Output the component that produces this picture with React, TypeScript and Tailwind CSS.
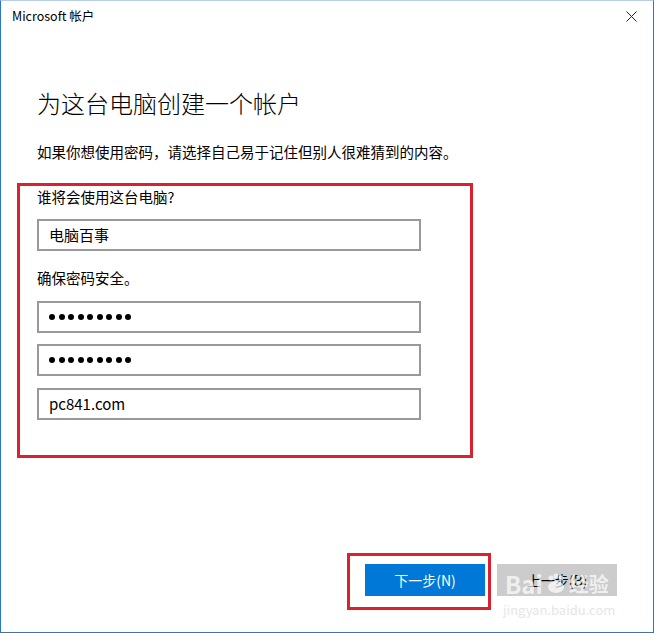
const cjk = { fontFamily: '"Segoe UI", "Noto Sans CJK SC", "Noto Sans", sans-serif' };

function Field({ children }: { children: React.ReactNode }) {
  return (
    <div className="flex h-[32px] w-[384px] items-center border-2 border-[#999999] bg-white pl-[10px]">
      {children}
    </div>
  );
}

function Dots() {
  return (
    <div className="flex gap-[3.5px]">
      {Array.from({ length: 9 }).map((_, i) => (
        <span key={i} className="h-[6px] w-[6px] rounded-full bg-black" />
      ))}
    </div>
  );
}

export default function App() {
  return (
    <div
      className="relative flex h-[633px] w-[654px] flex-col border border-[#2b79c2] border-t-[#b6d0ea] bg-white text-black"
      style={cjk}
    >
      <div className="flex h-[31px] shrink-0 items-center justify-between pl-[11px] pr-[16px]">
        <span className="text-[12.5px]">Microsoft 帐户</span>
        <svg width="11" height="11" viewBox="0 0 11 11" className="text-[#222]">
          <path d="M0.5 0.5 L10.5 10.5 M10.5 0.5 L0.5 10.5" stroke="currentColor" strokeWidth="1" />
        </svg>
      </div>

      <div className="flex flex-col pl-[36px]">
        <h1 className="mt-[55px] text-[24px] font-light leading-[32px]">为这台电脑创建一个帐户</h1>
        <p className="mt-[23px] text-[14.5px] leading-[20px]">
          如果你想使用密码，请选择自己易于记住但别人很难猜到的内容。
        </p>
      </div>

      <div className="ml-[16px] mt-[21px] flex h-[275px] w-[456px] flex-col border-[3px] border-[#d8222e] pl-[17px] pt-[1px]">
        <label className="text-[14.5px] leading-[20px]">谁将会使用这台电脑?</label>
        <div className="mt-[12px]">
          <Field>
            <span className="text-[15px]">电脑百事</span>
          </Field>
        </div>
        <label className="mt-[17px] text-[14.5px] leading-[20px]">确保密码安全。</label>
        <div className="mt-[13px]">
          <Field>
            <Dots />
          </Field>
        </div>
        <div className="mt-[11px]">
          <Field>
            <Dots />
          </Field>
        </div>
        <div className="mt-[12px]">
          <Field>
            <span className="text-[15px]">pc841.com</span>
          </Field>
        </div>
      </div>

      <div className="mt-[95px] flex items-start justify-end gap-[6px] pr-[36px]">
        <div className="h-[57px] w-[144px] border-[3px] border-[#d8222e] pl-[15px] pt-[8px]">
          <button className="h-[32px] w-[120px] bg-[#0078d7] text-[14px] text-white">下一步(N)</button>
        </div>
        <div className="relative mt-[11px]">
          <button className="h-[32px] w-[120px] bg-[#cccccc] text-[14px] text-black">上一步(B)</button>
          <div className="pointer-events-none absolute left-[8px] top-[8px] flex items-center gap-[2px] text-[24px] font-bold leading-none text-white/70">
            <span>Bai</span>
            <svg width="22" height="22" viewBox="0 0 22 22" className="fill-white/70">
              <circle cx="6" cy="5" r="2.5" />
              <circle cx="11" cy="3" r="2.5" />
              <circle cx="16" cy="5" r="2.5" />
              <ellipse cx="11" cy="14" rx="8" ry="6" />
            </svg>
            <span className="text-[20px]">经验</span>
          </div>
          <div className="pointer-events-none absolute left-[6px] top-[36px] text-[13px] text-[#e6e6e6]">
            jingyan.baidu.com
          </div>
        </div>
      </div>
    </div>
  );
}
